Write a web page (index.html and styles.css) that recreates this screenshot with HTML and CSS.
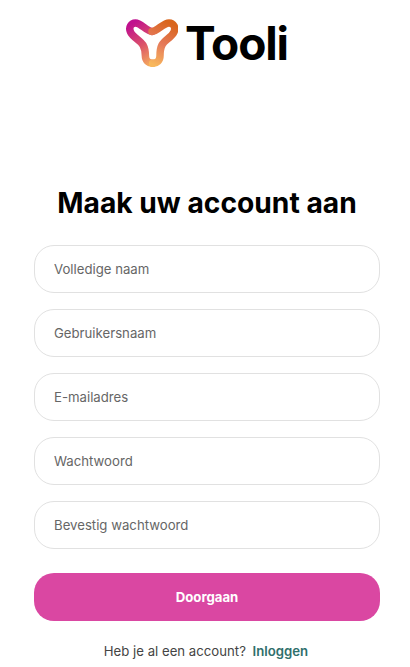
FILE: index.html
```html
<!DOCTYPE html>
<html lang="nl">
<head>
<meta charset="utf-8">
<title>Tooli</title>
<link rel="stylesheet" href="styles.css">
</head>
<body>
<main class="page">
  <header class="logo">
    <svg class="logo-mark" width="52" height="48" viewBox="0 0 52 48" aria-hidden="true">
      <defs>
        <linearGradient id="lg" gradientUnits="userSpaceOnUse" x1="4" y1="6" x2="30" y2="46">
          <stop offset="0" stop-color="#c0108e"/>
          <stop offset="0.5" stop-color="#dc5468"/>
          <stop offset="1" stop-color="#f8b85c"/>
        </linearGradient>
        <linearGradient id="lg2" gradientUnits="userSpaceOnUse" x1="48" y1="6" x2="28" y2="46">
          <stop offset="0" stop-color="#d9651c"/>
          <stop offset="0.5" stop-color="#e5795a"/>
          <stop offset="1" stop-color="#f8b85c"/>
        </linearGradient>
      </defs>
      <path d="M26 12.400C20.500 12.400 15 3.900 9.500 3.900C5 3.900 2.500 8.500 4.500 13C7 18.500 14 21 17 26C19 29.500 19.400 32 19.400 37C19.400 41.500 22.500 44.300 26.700 44.300" fill="none" stroke="url(#lg)" stroke-width="7.500" stroke-linecap="round"/>
      <path d="M26 12.400C31.500 12.400 37 3.900 43 3.900C47.500 3.900 50 8.500 48 13C45.500 18.500 38.500 21 36 26C34.200 29.500 34 32 34 37C34 41.500 31 44.300 26.700 44.300" fill="none" stroke="url(#lg2)" stroke-width="7.500" stroke-linecap="round"/>
    </svg>
    <span class="logo-text">Tooli</span>
  </header>
  <h1 class="title">Maak uw account aan</h1>
  <form class="form">
    <input class="field" type="text" placeholder="Volledige naam">
    <input class="field" type="text" placeholder="Gebruikersnaam">
    <input class="field" type="email" placeholder="E-mailadres">
    <input class="field" type="password" placeholder="Wachtwoord">
    <input class="field" type="password" placeholder="Bevestig wachtwoord">
    <button class="submit" type="button">Doorgaan</button>
  </form>
  <p class="signin">Heb je al een account? <a class="signin-link" href="#">Inloggen</a></p>
</main>
</body>
</html>
```
FILE: styles.css
```css
* { box-sizing: border-box; }
html, body { margin: 0; padding: 0; background: #fff; }
body { font-family: Inter, "Liberation Sans", sans-serif; overflow: hidden; height: 667px; }
.page { width: 410px; padding: 16px 30px 0 34px; display: flex; flex-direction: column; }
.logo { display: flex; align-items: center; justify-content: center; gap: 7px; height: 54px; }
.logo-mark { flex: none; }
.logo-text { font-size: 46px; font-weight: 700; letter-spacing: -1.1px; color: #000; line-height: 54px; }
.title { margin: 116px 0 0; text-align: center; font-size: 28.2px; line-height: 34px; font-weight: 700; color: #000; white-space: nowrap; }
.form { display: flex; flex-direction: column; gap: 16px; margin-top: 25px; }
.field { display: block; width: 100%; height: 48px; padding: 0 19px; border: 1px solid #e1e1e1; border-radius: 20px; background: #fff; font: 400 13.2px Inter, "Liberation Sans", sans-serif; color: #333; outline: none; }
.field::placeholder { color: #666; opacity: 1; }
.submit { height: 48px; margin-top: 8px; border: 0; border-radius: 20px; background: #da47a2; color: #fff; font: 700 13.2px Inter, "Liberation Sans", sans-serif; }
.signin { margin: 21px 0 0; padding-right: 2px; text-align: center; font-size: 13.2px; line-height: 18px; color: #444; }
.signin-link { margin-left: 3px; color: #2f6f6c; font-weight: 600; text-decoration: none; }
```
